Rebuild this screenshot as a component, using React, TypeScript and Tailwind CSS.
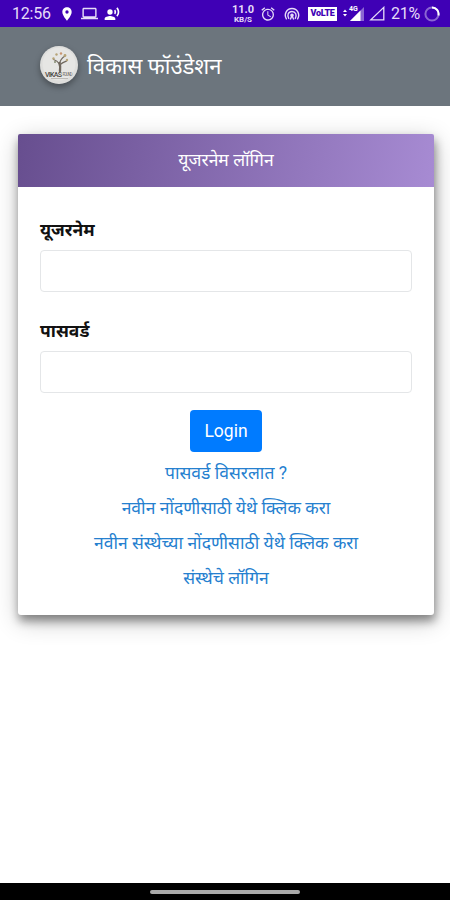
import React from "react";
import { MdAlarm, MdLaptop, MdLocationOn, MdRecordVoiceOver } from "react-icons/md";

const links = [
  "पासवर्ड विसरलात ?",
  "नवीन नोंदणीसाठी येथे क्लिक करा",
  "नवीन संस्थेच्या नोंदणीसाठी येथे क्लिक करा",
  "संस्थेचे लॉगिन",
];

const HotspotIcon = () => (
  <svg width="16" height="16" viewBox="0 0 16 16" fill="none" stroke="currentColor" strokeWidth="1.4">
    <path d="M2.6 13.4C-.6 8.500 2.600 2.500 8 2.500s8.600 6 5.400 10.900" />
    <path d="M4.900 12.800C2.600 9.300 4.400 5.500 8 5.500s5.400 3.800 3.100 7.300" />
    <path d="M6.300 13.500 8 9.500l1.700 4" />
    <circle cx="8" cy="9.200" r="1.100" fill="currentColor" />
  </svg>
);

const SignalIcon = () => (
  <svg width="15" height="14" viewBox="0 0 15 14">
    <path d="M15 0v14H1z" fill="#fff" fillOpacity=".4" />
    <path d="M11.5 3.5V14H1z" fill="#fff" />
  </svg>
);

const EmptySignalIcon = () => (
  <svg width="16" height="15" viewBox="0 0 16 15" fill="none" stroke="currentColor" strokeWidth="1.3">
    <path d="M14.8 1.4v12.4H1.8z" />
  </svg>
);

const BatteryIcon = () => (
  <svg width="16" height="16" viewBox="0 0 16 16" fill="none" stroke="#fff" strokeWidth="2">
    <circle cx="8" cy="8" r="6.6" strokeOpacity=".4" />
    <path d="M8 1.4A6.6 6.6 0 0 1 14.4 9.5" />
  </svg>
);

const StatusBar = () => (
  <div className="flex h-[27px] shrink-0 items-center bg-[#3f00b5] pl-3 pr-[10px] text-[#e6dcf8]">
    <span className="w-[38px] text-base leading-none tracking-[-0.2px]">12:56</span>
    <MdLocationOn className="ml-[9px] size-4 text-white" />
    <MdLaptop className="ml-[6px] size-[17px]" />
    <MdRecordVoiceOver className="ml-[6px] size-4 text-white" />
    <div className="ml-auto flex w-[22px] flex-col items-center font-bold">
      <span className="text-[11px] leading-[11px]">11.0</span>
      <span className="text-[8px] leading-[9px]">KB/S</span>
    </div>
    <MdAlarm className="ml-[6px] size-4" />
    <span className="ml-2">
      <HotspotIcon />
    </span>
    <span className="ml-2 flex h-[14px] w-[29px] items-center justify-center bg-white text-[9px] font-black leading-none tracking-[-0.3px] text-[#3f00b5]">
      VoLTE
    </span>
    <div className="relative ml-[6px] flex w-[21px] items-center justify-end">
      <svg className="absolute left-0 top-[2px]" width="4" height="8" viewBox="0 0 4 8" fill="#fff">
        <path d="M0 3 2 .5 4 3zM0 5h4L2 7.5z" />
      </svg>
      <span className="absolute -top-px left-[6px] text-[7px] font-bold leading-none text-white">4G</span>
      <SignalIcon />
    </div>
    <span className="ml-[5px]">
      <EmptySignalIcon />
    </span>
    <span className="ml-[6px] w-[29px] text-base leading-none tracking-[-0.3px]">21%</span>
    <span className="ml-1">
      <BatteryIcon />
    </span>
  </div>
);

const Logo = () => (
  <div className="-mt-1 size-[38px] rounded-full shadow-[0_3px_6px_rgba(0,0,0,0.35)]">
    <svg width="38" height="38" viewBox="0 0 38 38">
      <circle cx="19" cy="19" r="19" fill="#dededc" />
      <circle cx="19" cy="18" r="16.500" fill="#e6e6e4" />
      <g fill="none" stroke="#6f675d" strokeLinecap="round">
        <path d="M20 25c.6-4 .2-6-.6-8" strokeWidth="2.400" />
        <path d="M19.500 18c-2-3-4-4-6-4.500M20 17c0-3 2-5 5-7M21 18c2-2 4-2 5.500-3" strokeWidth="1.200" />
      </g>
      <g fill="#b7a477">
        <circle cx="13.500" cy="12.500" r="1.200" />
        <circle cx="16.500" cy="8.500" r="1.200" />
        <circle cx="25" cy="9.500" r="1.400" />
        <circle cx="27" cy="14" r="1.200" />
      </g>
      <circle cx="21" cy="7.500" r="1.200" fill="#c99570" />
      <circle cx="15" cy="16" r="1" fill="#858c72" />
      <text x="5" y="30.500" fontSize="7" fontWeight="500" fill="#4b4845" textLength="17">VIKAS</text>
      <text x="22.500" y="30" fontSize="4.500" fill="#77736e" textLength="10">FOUND</text>
      <path d="M11 32.500h17" stroke="#b3b0ab" strokeWidth=".8" />
    </svg>
  </div>
);

const Field = ({ label, type }: { label: string; type: string }) => (
  <label className="flex flex-col">
    <span className="h-[33px] text-[17.500px] font-bold leading-[26px] text-[#111]">{label}</span>
    <input type={type} className="h-[42px] w-full rounded border border-[#e4e6e8] bg-white px-3 outline-none" />
  </label>
);

export default function App() {
  return (
    <div className="flex h-[900px] w-[450px] flex-col overflow-hidden bg-white font-[Roboto,'Noto_Sans','Noto_Sans_Devanagari',sans-serif]">
      <StatusBar />
      <header className="flex h-[79px] shrink-0 items-center gap-[9px] bg-[#6c757d] pl-10">
        <Logo />
        <h1 className="text-[22px] leading-none text-white">विकास फॉउंडेशन</h1>
      </header>

      <main className="flex-1 pl-[18px] pr-4 pt-7">
        <section className="h-[481px] rounded-[3px] bg-white shadow-[1px_6px_10px_rgba(0,0,0,0.4),1px_6px_24px_rgba(0,0,0,0.24)]">
          <div className="flex h-[53px] items-center justify-center rounded-t-[2px] bg-linear-[100deg,#674e8f,#a78bd3] text-[17.500px] text-white">
            यूजरनेम लॉगिन
          </div>
          <form className="flex flex-col px-[22px] pt-[30px]" onSubmit={(e) => e.preventDefault()}>
            <div className="flex flex-col gap-[26px]">
              <Field label="यूजरनेम" type="text" />
              <Field label="पासवर्ड" type="password" />
            </div>
            <button className="mt-[17px] h-[42px] w-[72px] self-center rounded bg-[#007bff] text-[17.500px] text-white">
              Login
            </button>
            <nav className="mt-1 flex flex-col items-center">
              {links.map((text) => (
                <a key={text} href="#" className="h-[35px] whitespace-nowrap text-[17.500px] leading-[35px] text-[#2580cf]">
                  {text}
                </a>
              ))}
            </nav>
          </form>
        </section>
      </main>

      <div className="flex h-[17px] shrink-0 items-center justify-center bg-black">
        <div className="h-1 w-[150px] rounded-full bg-[#aaa]" />
      </div>
    </div>
  );
}
